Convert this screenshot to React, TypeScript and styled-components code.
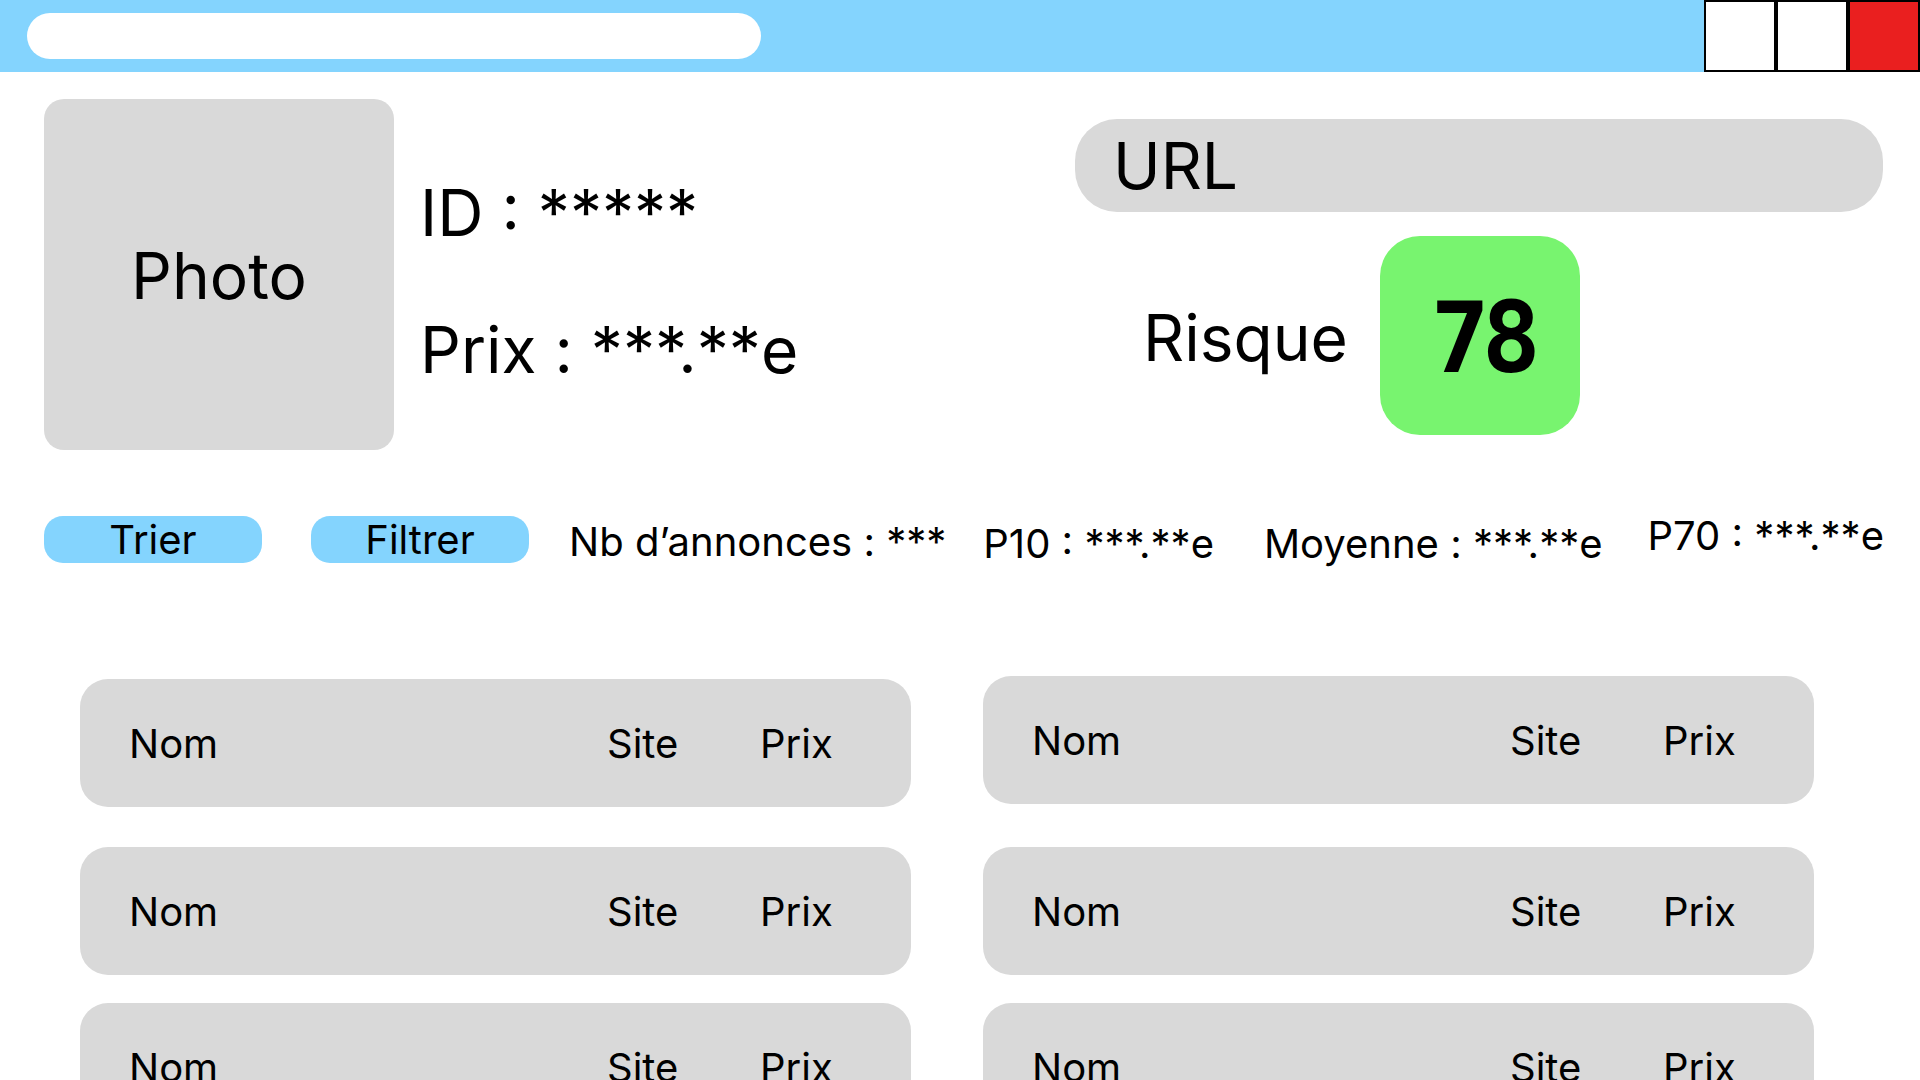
import React from "react";
import styled, { createGlobalStyle } from "styled-components";

const GlobalStyle = createGlobalStyle`
  html, body {
    margin: 0;
    padding: 0;
    background: #ffffff;
  }
  body {
    font-family: Inter, "Noto Sans", "Liberation Sans", sans-serif;
    color: #000000;
    width: 1920px;
    height: 1080px;
    overflow: hidden;
  }
  * { box-sizing: border-box; }
`;

const Page = styled.div`
  width: 1920px;
  height: 1080px;
  display: flex;
  flex-direction: column;
  overflow: hidden;
`;

const TitleBar = styled.header`
  height: 72px;
  flex: 0 0 72px;
  background: #84d4fe;
  display: flex;
  align-items: center;
  justify-content: space-between;
`;

const SearchField = styled.div`
  margin-left: 27px;
  width: 734px;
  height: 46px;
  background: #ffffff;
  border-radius: 23px;
`;

const WindowControls = styled.div`
  display: flex;
  align-self: stretch;
`;

const WindowButton = styled.div<{ $close?: boolean }>`
  width: 72px;
  height: 72px;
  border: 2px solid #000000;
  background: ${(p) => (p.$close ? "#ea1f1f" : "#ffffff")};
`;

const Header = styled.section`
  display: flex;
  align-items: flex-start;
  padding: 27px 37px 0 44px;
`;

const PhotoBox = styled.div`
  width: 350px;
  height: 351px;
  flex: 0 0 auto;
  background: #d9d9d9;
  border-radius: 20px;
  display: flex;
  align-items: center;
  justify-content: center;
  font-size: 64px;
  padding-top: 2px;
`;

const InfoColumn = styled.div`
  display: flex;
  flex-direction: column;
  gap: 60px;
  margin-left: 26px;
  padding-top: 75px;
`;

const BigText = styled.div`
  font-size: 64px;
  line-height: 77px;
  white-space: nowrap;
`;

const RightColumn = styled.div`
  margin-left: auto;
  width: 808px;
  display: flex;
  flex-direction: column;
  padding-top: 20px;
`;

const UrlBar = styled.div`
  height: 93px;
  background: #d9d9d9;
  border-radius: 42px;
  display: flex;
  align-items: center;
  padding-left: 38px;
  font-size: 64px;
`;

const RiskRow = styled.div`
  display: flex;
  align-items: center;
  margin-top: 24px;
  padding-left: 68px;
  gap: 32px;
`;

const RiskLabel = styled.div`
  font-size: 64px;
  padding-top: 4px;
`;

const RiskBadge = styled.div`
  width: 200px;
  height: 199px;
  border-radius: 40px;
  background: #78f46f;
  display: flex;
  align-items: center;
  justify-content: center;
  font-family: "DejaVu Sans Mono", "Liberation Mono", monospace;
  font-weight: 700;
  font-size: 98px;
  letter-spacing: -8px;
  line-height: 1;
  padding-left: 4px;
  padding-top: 4px;
`;

const StatsBar = styled.section`
  display: flex;
  align-items: flex-start;
  margin-top: 66px;
  padding: 0 0 0 44px;
  height: 47px;
`;

const PillButton = styled.button<{ $ml: number }>`
  width: 218px;
  height: 47px;
  margin-left: ${(p) => p.$ml}px;
  border: none;
  border-radius: 19px;
  background: #84d4fe;
  font-family: Inter, "Noto Sans", sans-serif;
  font-size: 40px;
  line-height: 47px;
  padding: 0;
  color: #000000;
`;

const Stat = styled.div<{ $dy: number; $ml: number }>`
  font-size: 40px;
  line-height: 47px;
  white-space: nowrap;
  margin-top: ${(p) => p.$dy}px;
  margin-left: ${(p) => p.$ml}px;
`;

const Listings = styled.section`
  display: grid;
  grid-template-columns: 831px 831px;
  column-gap: 72px;
  margin-top: 116px;
  padding-left: 80px;
`;

const ListColumn = styled.div<{ $shift: number }>`
  display: flex;
  flex-direction: column;
  margin-top: ${(p) => p.$shift}px;
`;

const ListingRow = styled.div<{ $mt: number }>`
  height: 128px;
  flex: 0 0 128px;
  margin-top: ${(p) => p.$mt}px;
  background: #d9d9d9;
  border-radius: 28px;
  display: grid;
  grid-template-columns: 478px 153px 1fr;
  align-items: center;
  padding-left: 49px;
  font-size: 40px;
`;

const Cell = styled.span`
  white-space: nowrap;
`;

const gaps = [0, 40, 28];

function Listing({ mt }: { mt: number }) {
  return (
    <ListingRow $mt={mt}>
      <Cell>Nom</Cell>
      <Cell>Site</Cell>
      <Cell>Prix</Cell>
    </ListingRow>
  );
}

export default function App() {
  return (
    <>
      <GlobalStyle />
      <Page>
        <TitleBar>
          <SearchField />
          <WindowControls>
            <WindowButton />
            <WindowButton />
            <WindowButton $close />
          </WindowControls>
        </TitleBar>

        <Header>
          <PhotoBox>Photo</PhotoBox>
          <InfoColumn>
            <BigText>ID : *****</BigText>
            <BigText>Prix : ***.**e</BigText>
          </InfoColumn>
          <RightColumn>
            <UrlBar>URL</UrlBar>
            <RiskRow>
              <RiskLabel>Risque</RiskLabel>
              <RiskBadge>78</RiskBadge>
            </RiskRow>
          </RightColumn>
        </Header>

        <StatsBar>
          <PillButton $ml={0}>Trier</PillButton>
          <PillButton $ml={49}>Filtrer</PillButton>
          <Stat $ml={40} $dy={2}>Nb d’annonces : ***</Stat>
          <Stat $ml={37} $dy={4}>P10 : ***.**e</Stat>
          <Stat $ml={50} $dy={4}>Moyenne : ***.**e</Stat>
          <Stat $ml={45} $dy={-4}>P70 : ***.**e</Stat>
        </StatsBar>

        <Listings>
          <ListColumn $shift={0}>
            {gaps.map((g, i) => (
              <Listing key={i} mt={g} />
            ))}
          </ListColumn>
          <ListColumn $shift={-3}>
            {gaps.map((g, i) => (
              <Listing key={i} mt={i === 1 ? g + 3 : g} />
            ))}
          </ListColumn>
        </Listings>
      </Page>
    </>
  );
}
